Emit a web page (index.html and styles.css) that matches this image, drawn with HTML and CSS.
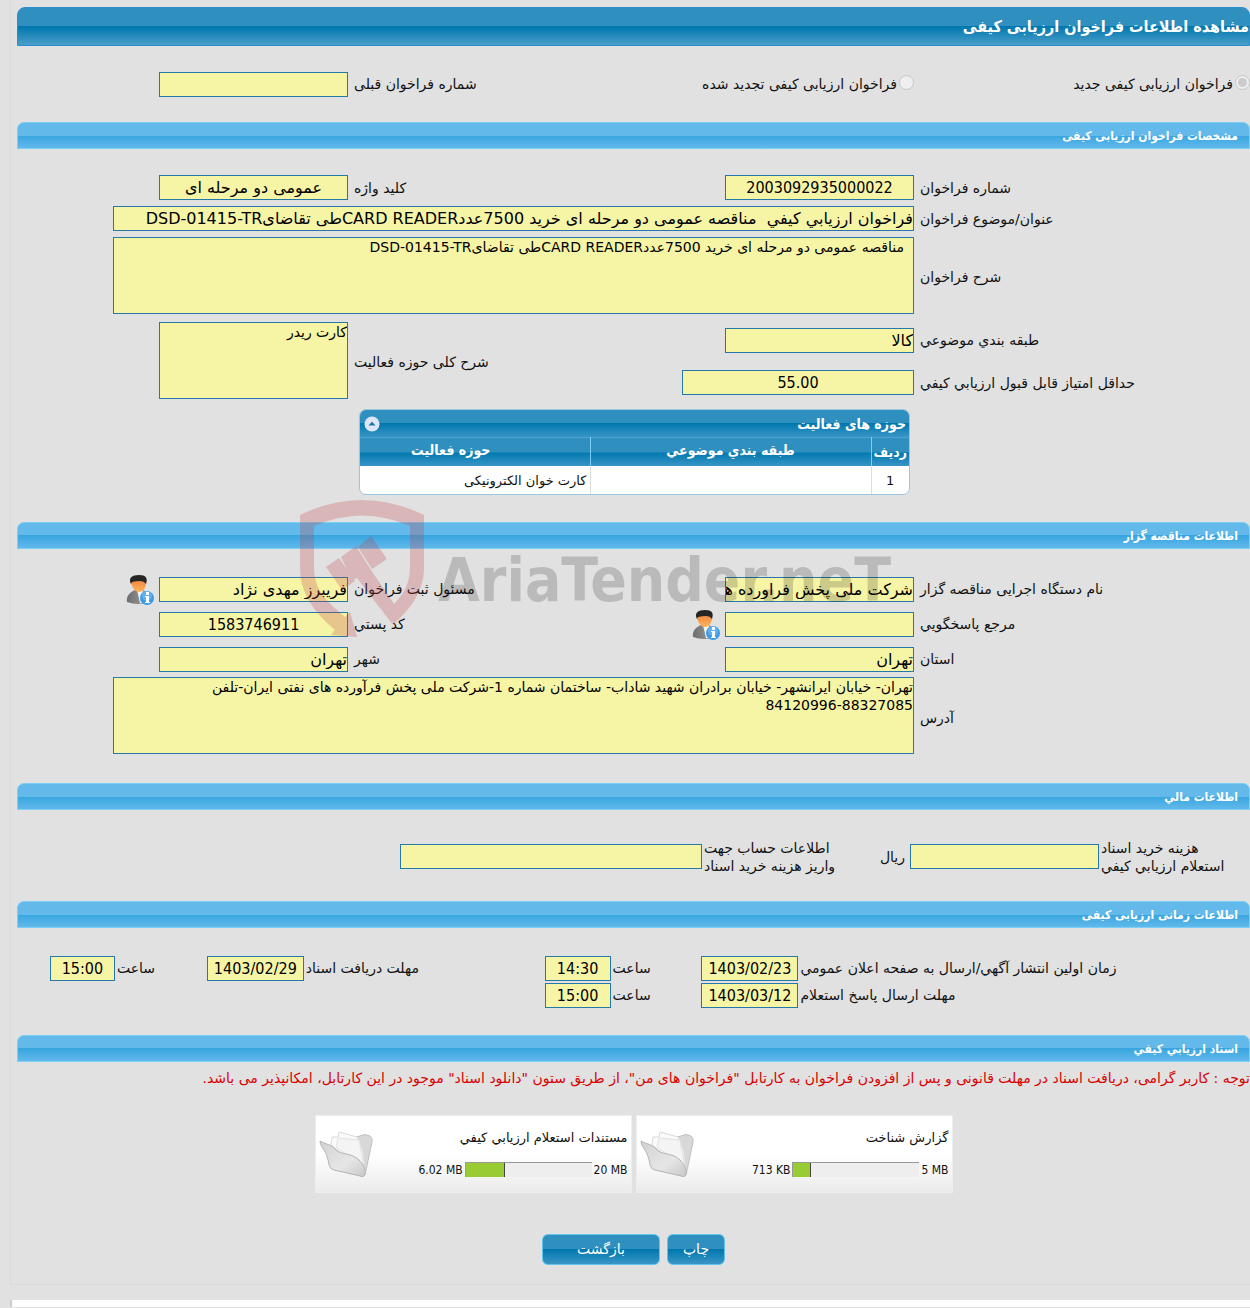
FILE: index.html
```html
<!DOCTYPE html>
<html lang="fa" dir="rtl">
<head>
<meta charset="UTF-8">
<meta name="viewport" content="width=device-width, initial-scale=1.0">
<title>مشاهده اطلاعات فراخوان ارزیابی کیفی</title>
<link rel="stylesheet" href="styles.css">
</head>
<body>

<main class="panel">
  <h1 class="page-title">مشاهده اطلاعات فراخوان ارزیابی کیفی</h1>

  <div class="type-row">
    <label class="radio"><input type="radio" name="callType" checked disabled>فراخوان ارزیابی کیفی جدید</label>
    <label class="radio"><input type="radio" name="callType" disabled>فراخوان ارزیابی کیفی تجدید شده</label>
    <label class="label" for="prevNo">شماره فراخوان قبلی</label>
    <input class="field" id="prevNo" type="text" readonly>
  </div>

  <!-- مشخصات فراخوان -->
  <h2 class="section-title">مشخصات فراخوان ارزیابی کیفی</h2>
  <div class="form-grid specs">
    <label class="label" for="callNo">شماره فراخوان</label>
    <input class="field num" id="callNo" type="text" value="2003092935000022" readonly>
    <label class="label" for="keyword">کلید واژه</label>
    <input class="field center" id="keyword" type="text" value="عمومی دو مرحله ای" readonly>

    <label class="label" for="subject">عنوان/موضوع فراخوان</label>
    <input class="field wide" id="subject" type="text" value="فراخوان ارزيابي کيفي  مناقصه عمومی دو مرحله ای خرید 7500عددCARD READERطی تقاضایDSD-01415-TR" readonly>

    <label class="label" for="desc">شرح فراخوان</label>
    <textarea class="field area wide indent" id="desc" readonly>مناقصه عمومی دو مرحله ای خرید 7500عددCARD READERطی تقاضایDSD-01415-TR</textarea>

    <label class="label" for="class">طبقه بندي موضوعي</label>
    <input class="field" id="class" type="text" value="کالا" readonly>
    <label class="label two-rows" for="scope">شرح کلی حوزه فعالیت</label>
    <textarea class="field area two-rows" id="scope" readonly>کارت ریدر</textarea>

    <label class="label" for="minScore">حداقل امتیاز قابل قبول ارزيابي کيفي</label>
    <input class="field medium num" id="minScore" type="text" value="55.00" readonly>
  </div>

  <div class="activity">
    <div class="activity-head">
      <span>حوزه های فعالیت</span>
      <button class="collapse" type="button" aria-label="بستن">
        <svg width="16" height="16" viewBox="0 0 16 16"><circle cx="8" cy="8" r="7.5" fill="#dde6f6"/><path d="M4.5 9.5h7L8 5.8z" fill="#1577ab"/></svg>
      </button>
    </div>
    <table>
      <thead>
        <tr><th class="col-no">ردیف</th><th class="col-class">طبقه بندي موضوعي</th><th class="col-area">حوزه فعالیت</th></tr>
      </thead>
      <tbody>
        <tr><td class="center">1</td><td></td><td>کارت خوان الکترونیکی</td></tr>
      </tbody>
    </table>
  </div>

  <!-- مناقصه گزار -->
  <h2 class="section-title">اطلاعات مناقصه گزار</h2>
  <div class="form-grid owner">
    <label class="label" for="org">نام دستگاه اجرایی مناقصه گزار</label>
    <input class="field" id="org" type="text" value="شرکت ملی پخش فراورده های نفتی ایران" readonly>
    <label class="label" for="registrar">مسئول ثبت فراخوان</label>
    <div class="with-icon">
      <input class="field" id="registrar" type="text" value="فریبرز مهدی نژاد" readonly>
      <svg class="person" viewBox="0 0 28 31"><use href="#person"/></svg>
    </div>

    <label class="label" for="contact">مرجع پاسخگويي</label>
    <div class="with-icon">
      <input class="field" id="contact" type="text" readonly>
      <svg class="person" viewBox="0 0 28 31"><use href="#person"/></svg>
    </div>
    <label class="label" for="zip">کد پستي</label>
    <input class="field num" id="zip" type="text" value="1583746911" readonly>

    <label class="label" for="province">استان</label>
    <input class="field" id="province" type="text" value="تهران" readonly>
    <label class="label" for="city">شهر</label>
    <input class="field" id="city" type="text" value="تهران" readonly>

    <label class="label" for="address">آدرس</label>
    <textarea class="field area wide" id="address" readonly>تهران- خیابان ایرانشهر- خیابان برادران شهید شاداب- ساختمان شماره 1-شرکت ملی پخش فرآورده های نفتی ایران-تلفن 88327085-84120996</textarea>
  </div>

  <!-- مالی -->
  <h2 class="section-title">اطلاعات مالي</h2>
  <div class="money-row">
    <label for="fee">هزينه خريد اسناد<br>استعلام ارزيابي کيفي</label>
    <input class="field" id="fee" type="text" readonly>
    <span class="unit">ریال</span>
    <label for="account">اطلاعات حساب جهت<br>واریز هزینه خرید اسناد</label>
    <input class="field" id="account" type="text" readonly>
  </div>

  <!-- زمانی -->
  <h2 class="section-title">اطلاعات زمانی ارزیابی کیفی</h2>
  <div class="time-grid">
    <label for="pubDate">زمان اولين انتشار آگهي/ارسال به صفحه اعلان عمومي</label>
    <input class="field num" id="pubDate" type="text" value="1403/02/23" readonly>
    <label for="pubTime">ساعت</label>
    <input class="field num" id="pubTime" type="text" value="14:30" readonly>
    <label for="docDate">مهلت دریافت اسناد</label>
    <input class="field num" id="docDate" type="text" value="1403/02/29" readonly>
    <label for="docTime">ساعت</label>
    <input class="field num" id="docTime" type="text" value="15:00" readonly>

    <label class="first-col" for="ansDate">مهلت ارسال پاسخ استعلام</label>
    <input class="field num" id="ansDate" type="text" value="1403/03/12" readonly>
    <label for="ansTime">ساعت</label>
    <input class="field num" id="ansTime" type="text" value="15:00" readonly>
  </div>

  <!-- اسناد -->
  <h2 class="section-title">اسناد ارزيابي کيفي</h2>
  <p class="notice">توجه : کاربر گرامی، دریافت اسناد در مهلت قانونی و پس از افزودن فراخوان به کارتابل "فراخوان های من"، از طریق ستون "دانلود اسناد" موجود در این کارتابل، امکانپذیر می باشد.</p>

  <div class="docs">
    <div class="doc">
      <div class="doc-info">
        <span class="doc-name">گزارش شناخت</span>
        <div class="usage" dir="ltr">
          <span>713 KB</span>
          <div class="bar"><div class="bar-fill" style="width: 14%"></div></div>
          <span>5 MB</span>
        </div>
      </div>
      <svg class="folder" viewBox="0 0 54 50"><use href="#folder"/></svg>
    </div>
    <div class="doc">
      <div class="doc-info">
        <span class="doc-name">مستندات استعلام ارزيابي کيفي</span>
        <div class="usage" dir="ltr">
          <span>6.02 MB</span>
          <div class="bar"><div class="bar-fill" style="width: 31%"></div></div>
          <span>20 MB</span>
        </div>
      </div>
      <svg class="folder" viewBox="0 0 54 50"><use href="#folder"/></svg>
    </div>
  </div>

  <div class="actions">
    <button class="btn" type="button">چاپ</button>
    <button class="btn btn-wide" type="button">بازگشت</button>
  </div>

  <!-- واترمارک -->
  <svg class="watermark" viewBox="0 0 604 142" direction="ltr">
    <g fill="#c23b43" opacity=".25">
      <path d="M0 15Q62-15 124 15V67C124 92 111 108 93 125L57 78 52 80 41 57 56 46 71 70 94 104C104 93 110 84 110 66V26Q62 5 14 26V67C14 92 28 102 45 117L50 112 57 137 31 135 35 130C14 112 0 94 0 67Z"/>
      <path d="M26 67 39 58 55 81 42 90ZM58 47 71 36 87 59 72 69Z"/>
    </g>
    <text x="138" y="101">AriaTender.neT</text>
  </svg>
</main>

<footer class="footer"></footer>

<svg class="defs" width="0" height="0" aria-hidden="true">
  <defs>
    <linearGradient id="skin" x1="0" y1="0" x2="0" y2="1"><stop offset="0" stop-color="#e8783a"/><stop offset="1" stop-color="#ffb45c"/></linearGradient>
    <linearGradient id="suit" x1="0" y1="0" x2="1" y2="0"><stop offset="0" stop-color="#6d6d6d"/><stop offset="1" stop-color="#a5a5a5"/></linearGradient>
    <linearGradient id="paper" x1="0" y1="0" x2="1" y2="1"><stop offset="0" stop-color="#d2d2d2"/><stop offset=".6" stop-color="#e6e6e6"/><stop offset="1" stop-color="#c8c8c8"/></linearGradient>
    <symbol id="person" viewBox="0 0 28 31">
      <path d="M1 28C0 22 4 18 9 16h8c5 2 8 6 6 12Q12 32 1 28Z" fill="url(#suit)"/>
      <path d="M11 16h6l-1 13h-2Z" fill="#f2f2f2"/>
      <path d="M5 8Q6 2 12 2T20 8C20 14 17 18 13 18S6 14 5 8Z" fill="url(#skin)"/>
      <path d="M5 10C2 4 6 1 13 1S22 4 20 10Q18 7 14 7T6 8Z" fill="#252525"/>
      <circle cx="21" cy="24" r="7" fill="#3b9be6"/>
      <circle cx="21" cy="22" r="5" fill="#79c1f4" opacity=".6"/>
      <path d="M20 18h3v3h-3ZM19 22h4v6h1v1h-5v-1h1v-5h-1Z" fill="#fff"/>
    </symbol>
    <symbol id="folder" viewBox="0 0 54 50">
      <path d="M12 20 30 10 41 7Q46 4 51 7 54 9 53 13L46 46 20 36Z" fill="#d8d8d8" stroke="#c0c0c0"/>
      <path d="M12 16 13 8 19 8 20 3 38 8Q46 22 45 38L30 30Z" fill="#fafafa" stroke="#dadada"/>
      <path d="M17 18 19 9 40 11 45 38Z" fill="#f4f4f4" stroke="#e2e2e2"/>
      <path d="M1 12C8 16 12 15 16 20C20 25 27 24 34 27C41 30 47 38 46 45Q45 49 41 47L15 41Q11 40 10 36C9 28 6 22 3 18Q1 15 1 12Z" fill="url(#paper)" stroke="#b4b4b4"/>
    </symbol>
  </defs>
</svg>

</body>
</html>
```

FILE: styles.css
```css
* {
  box-sizing: border-box;
}

body {
  margin: 0;
  background: #e1e1e1;
  color: #111;
  font-family: "DejaVu Sans", Tahoma, sans-serif;
  font-size: 14px;
  line-height: 18px;
  overflow-x: hidden;
}

.panel {
  position: relative;
  margin-left: 10px;
  padding: 7px 0 19px 6px;
  border-left: 1px solid #dadada;
  border-bottom: 1px solid #dadada;
}

.page-title,
.section-title,
.activity-head,
.activity th,
.num,
.usage {
  font-family: "DejaVu Sans Condensed", "DejaVu Sans", Tahoma, sans-serif;
}

.page-title {
  margin: 0;
  height: 39px;
  line-height: 38px;
  font-size: 16px;
  color: #fff;
  border: 1px solid #2b8fcb;
  border-radius: 8px 8px 0 0;
  background: linear-gradient(#2f90c0 50%, #0078af 50%, #4a9dc9);
}

.section-title {
  margin: 0;
  height: 27px;
  padding: 0 11px;
  line-height: 26px;
  font-size: 12px;
  color: #fff;
  border: 1px solid #7bcef5;
  border-radius: 7px 7px 0 0;
  background: linear-gradient(#63b9e9 50%, #38a5e0 50%, #61b9ea);
}

/* فیلدها */
.field {
  display: block;
  width: 189px;
  max-width: 100%;
  height: 25px;
  margin: 0;
  padding: 0;
  border: 1px solid #2579a9;
  border-radius: 0;
  background: #f6f4a5;
  color: #000;
  font-family: inherit;
  font-size: 16px;
}

.center,
.num {
  text-align: center;
}

.field.num {
  font-family: "DejaVu Sans Condensed", "DejaVu Sans", Tahoma, sans-serif;
}

.field.wide {
  width: 801px;
  grid-column: 2 / 5;
}

.field.medium {
  width: 232px;
}

.area {
  height: 77px;
  font-size: 14px;
  line-height: 18px;
  resize: none;
}

.indent {
  padding-right: 9px;
}

.label {
  padding-left: 6px;
  text-align: left;
}

.type-row,
.form-grid {
  display: grid;
  grid-template-columns: 336fr 283fr 283fr 331fr;
  align-items: center;
}

.type-row {
  height: 76px;
  grid-template-columns: 336fr 336fr 230fr 331fr;
}

.radio {
  display: flex;
  align-items: center;
  gap: 2px;
}

.radio input {
  width: 15px;
  height: 15px;
  margin: 0 0 3px;
}

.specs {
  padding: 26px 0 8px;
  row-gap: 6px;
}

.specs .area {
  margin-bottom: 2px;
}

.two-rows {
  grid-row: span 2;
}

.activity {
  width: 551px;
  max-width: 100%;
  margin: 0 340px 27px 0;
  border: 1px solid #9cc6e0;
  border-radius: 7px;
  overflow: hidden;
}

.activity-head {
  display: flex;
  justify-content: space-between;
  align-items: center;
  height: 27px;
  padding: 0 3px 0 4px;
  font-weight: bold;
  color: #fff;
  background: linear-gradient(#2f90c0 50%, #0078af 50%, #3a95c6);
}

.collapse {
  display: flex;
  padding: 0;
  border: 0;
  background: none;
}

.activity table {
  width: 100%;
  table-layout: fixed;
  border-collapse: collapse;
  background: #fff;
}

.activity th {
  height: 28px;
  padding: 0 0 4px;
  color: #fff;
  border-left: 1px solid #7bcef5;
  border-top: 1px solid #4aa0d5;
  background: linear-gradient(#2f90c0 50%, #0078af 50%, #3a95c6);
}

.activity .col-no {
  width: 38px;
  padding-bottom: 0;
}

.activity .col-class {
  width: 281px;
}

.activity .col-area {
  padding-right: 48px;
  border-left: 0;
}

.activity td {
  height: 28px;
  padding: 2px 3px 0;
  font-size: 13px;
  border-left: 1px solid #ddd;
}

.activity td:last-child {
  border-left: 0;
}

.owner {
  padding: 28px 0 29px;
  row-gap: 10px;
}

.owner .area {
  margin-top: -5px;
  padding-left: 30px;
}

.with-icon {
  display: flex;
  align-items: center;
  gap: 5px;
}

.person {
  width: 28px;
  height: 31px;
  margin: -3px 0;
  flex: none;
}

.money-row {
  display: grid;
  grid-template-columns: 151fr 189fr 68fr 140fr 302fr 383fr;
  align-items: center;
  padding: 29px 0 26px;
}

.money-row label {
  justify-self: end;
  text-align: right;
  padding-left: 2px;
  white-space: nowrap;
  text-align: left;
}

.money-row .field {
  width: 100%;
}

.unit {
  padding-right: 5px;
}

.time-grid {
  display: grid;
  grid-template-columns: 452fr 97fr 91fr 66fr 241fr 97fr 92fr 65fr 33fr;
  row-gap: 2px;
  align-items: center;
  padding: 28px 0 27px;
}

.time-grid label {
  text-align: left;
  padding-left: 2px;
  white-space: nowrap;
}

.time-grid .first-col {
  grid-column: 1;
}

.time-grid .field {
  width: 100%;
}

.notice {
  margin: 7px 0 28px;
  color: #d90000;
  white-space: nowrap;
}

.docs {
  display: flex;
  justify-content: center;
  gap: 4px;
}

.doc {
  display: flex;
  justify-content: space-between;
  align-items: center;
  width: 317px;
  height: 78px;
  padding: 0 3px;
  border: 1px solid #eee;
  background: linear-gradient(#fff 50%, #ebebeb);
}

.doc-info {
  display: flex;
  flex-direction: column;
  gap: 14px;
}

.doc-name {
  font-size: 13px;
}

.usage {
  display: flex;
  align-items: center;
  justify-content: flex-end;
  gap: 2px;
  font-size: 12px;
}

.bar {
  width: 127px;
  height: 15px;
  border-top: 1px solid #999;
  border-left: 1px solid #999;
  background: #eee;
}

.bar-fill {
  height: 100%;
  border-right: 1px solid #444;
  background: #9c3;
}

.folder {
  width: 54px;
  height: 50px;
}

.actions {
  display: flex;
  justify-content: center;
  gap: 7px;
  margin-top: 41px;
}

.btn {
  width: 58px;
  height: 31px;
  padding: 0;
  font-family: inherit;
  font-size: 14px;
  color: #fff;
  border: 1px solid #62c3ec;
  border-radius: 6px;
  background: linear-gradient(#2f90c0 50%, #0078af 50%, #3a95c6);
}

.btn-wide {
  width: 118px;
}

/* روی فرم قرار می‌گیرد */
.watermark {
  position: absolute;
  top: 500px;
  left: 289px;
  width: 604px;
  height: 142px;
  pointer-events: none;
}

.watermark text {
  font-family: "DejaVu Sans Condensed", "DejaVu Sans", sans-serif;
  font-weight: bold;
  font-size: 60px;
  opacity: .17;
}

.defs {
  position: absolute;
}

.footer {
  height: 7px;
  margin: 15px 0 0 10px;
  border-left: 2px solid #ccc;
  background: #fff;
}
```
